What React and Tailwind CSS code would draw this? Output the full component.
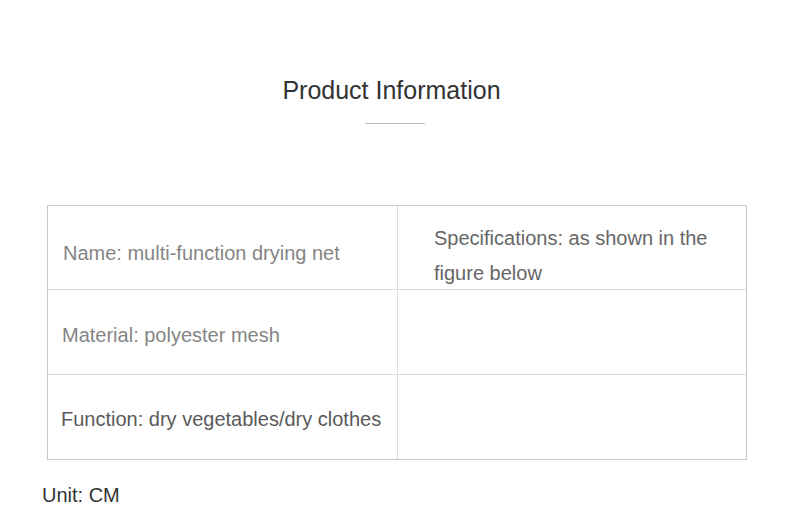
import React from 'react'

const rows = [
    { left: 'Name: multi-function drying net', leftColor: 'text-[#858585]', leftPad: 'pl-[15px] pt-[11px]', right: 'Specifications: as shown in the figure below', height: 'h-[83px]' },
    { left: 'Material: polyester mesh', leftColor: 'text-[#858585]', leftPad: 'pl-[14px] pt-[5px]', right: '', height: 'h-[85px]' },
    { left: 'Function: dry vegetables/dry clothes', leftColor: 'text-[#5a5a5a]', leftPad: 'pl-[13px] pt-[4px]', right: '', height: 'h-[85px]' },
]

const App = () => {
    return (
        <div className="w-[790px] h-[518px] bg-white overflow-hidden" style={{ fontFamily: '"Liberation Sans", Arial, sans-serif' }}>
            <div className="pt-[74px] flex flex-col items-center">
                <h2 className="text-[25px] leading-[32px] text-[#333333] mr-[7px]">Product Information</h2>
                <div className="mt-[17px] w-[60px] h-px bg-[#bdbdbd]"></div>
            </div>

            <div className="mt-[81px] ml-[47px] w-[700px] border border-[#c8c8c8]">
                {rows.map((row, i) => (
                    <div key={i} className={`flex ${row.height} ${i > 0 ? 'border-t border-[#dcdcdc]' : ''}`}>
                        <div className={`w-[350px] shrink-0 border-r border-[#dcdcdc] flex items-center text-[20px] ${row.leftColor} ${row.leftPad}`}>
                            {row.left}
                        </div>
                        <div className="flex-1 pl-[36px] pr-[20px] pt-[15px] text-[20px] leading-[35px] text-[#666666]">
                            {row.right}
                        </div>
                    </div>
                ))}
            </div>

            <div className="mt-[20px] ml-[42px] text-[20px] text-[#333333]">Unit: CM</div>
        </div>
    )
}

export default App
